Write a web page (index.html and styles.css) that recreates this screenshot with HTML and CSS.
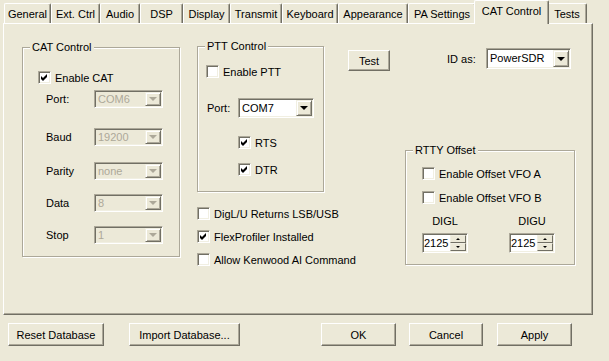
FILE: index.html
```html
<!DOCTYPE html>
<html lang="en">
<head>
    <meta charset="UTF-8">
    <meta name="viewport" content="width=device-width, initial-scale=1.0">
    <title>Setup - CAT Control</title>
    <link rel="stylesheet" href="styles.css">
</head>
<body>
<div class="dialog">

    <!-- Tab strip -->
    <div class="tabs">
        <div class="tab">General</div>
        <div class="tab">Ext. Ctrl</div>
        <div class="tab">Audio</div>
        <div class="tab">DSP</div>
        <div class="tab">Display</div>
        <div class="tab">Transmit</div>
        <div class="tab">Keyboard</div>
        <div class="tab">Appearance</div>
        <div class="tab">PA Settings</div>
        <div class="tab active">CAT Control</div>
        <div class="tab">Tests</div>
    </div>

    <!-- Tab page -->
    <div class="page">

        <!-- CAT Control group -->
        <div class="col col-cat">
            <div class="group group-cat">
                <span class="group-title">CAT Control</span>
                <div class="group-body body-cat">
                    <div class="check check-cat">
                        <span class="box"><svg width="7" height="7" viewBox="0 0 7 7"><polygon points="0,2 2,4 6,0 6,3 2,7 0,5" fill="#000"/></svg></span>
                        <span>Enable CAT</span>
                    </div>
                    <div class="fields">
                        <div class="field field-port">
                            <span class="field-label">Port:</span>
                            <div class="combo combo-cat disabled"><span class="combo-text">COM6</span><span class="combo-btn"><i class="arrow"></i></span></div>
                        </div>
                        <div class="field field-baud">
                            <span class="field-label">Baud</span>
                            <div class="combo combo-cat disabled"><span class="combo-text">19200</span><span class="combo-btn"><i class="arrow"></i></span></div>
                        </div>
                        <div class="field">
                            <span class="field-label">Parity</span>
                            <div class="combo combo-cat disabled"><span class="combo-text">none</span><span class="combo-btn"><i class="arrow"></i></span></div>
                        </div>
                        <div class="field">
                            <span class="field-label">Data</span>
                            <div class="combo combo-cat disabled"><span class="combo-text">8</span><span class="combo-btn"><i class="arrow"></i></span></div>
                        </div>
                        <div class="field">
                            <span class="field-label">Stop</span>
                            <div class="combo combo-cat disabled"><span class="combo-text">1</span><span class="combo-btn"><i class="arrow"></i></span></div>
                        </div>
                    </div>
                </div>
            </div>
        </div>

        <!-- PTT Control group + options -->
        <div class="col col-ptt">
            <div class="group group-ptt">
                <span class="group-title">PTT Control</span>
                <div class="group-body body-ptt">
                    <div class="check check-ptt">
                        <span class="box"></span>
                        <span>Enable PTT</span>
                    </div>
                    <div class="field field-ptt">
                        <span class="field-label ptt-label">Port:</span>
                        <div class="combo combo-ptt"><span class="combo-text">COM7</span><span class="combo-btn"><i class="arrow"></i></span></div>
                    </div>
                    <div class="check check-rts">
                        <span class="box"><svg width="7" height="7" viewBox="0 0 7 7"><polygon points="0,2 2,4 6,0 6,3 2,7 0,5" fill="#000"/></svg></span>
                        <span>RTS</span>
                    </div>
                    <div class="check check-dtr">
                        <span class="box"><svg width="7" height="7" viewBox="0 0 7 7"><polygon points="0,2 2,4 6,0 6,3 2,7 0,5" fill="#000"/></svg></span>
                        <span>DTR</span>
                    </div>
                </div>
            </div>
            <div class="options">
                <div class="check">
                    <span class="box"></span>
                    <span>DigL/U Returns LSB/USB</span>
                </div>
                <div class="check">
                    <span class="box"><svg width="7" height="7" viewBox="0 0 7 7"><polygon points="0,2 2,4 6,0 6,3 2,7 0,5" fill="#000"/></svg></span>
                    <span>FlexProfiler Installed</span>
                </div>
                <div class="check">
                    <span class="box"></span>
                    <span>Allow Kenwood AI Command</span>
                </div>
            </div>
        </div>

        <!-- Test button -->
        <div class="col col-test">
            <button class="btn btn-test">Test</button>
        </div>

        <!-- ID as + RTTY Offset -->
        <div class="col col-right">
            <div class="id-row">
                <span class="id-label">ID as:</span>
                <div class="combo combo-id"><span class="combo-text">PowerSDR</span><span class="combo-btn"><i class="arrow"></i></span></div>
            </div>
            <div class="group group-rtty">
                <span class="group-title">RTTY Offset</span>
                <div class="group-body body-rtty">
                    <div class="check check-vfoa">
                        <span class="box"></span>
                        <span>Enable Offset VFO A</span>
                    </div>
                    <div class="check check-vfob">
                        <span class="box"></span>
                        <span>Enable Offset VFO B</span>
                    </div>
                    <div class="spins">
                        <div class="spin-col">
                            <span class="spin-label">DIGL</span>
                            <div class="spin">
                                <span class="spin-text">2125</span>
                                <span class="spin-btns"><span class="spin-btn"><i class="tri-up"></i></span><span class="spin-btn"><i class="tri-down"></i></span></span>
                            </div>
                        </div>
                        <div class="spin-col">
                            <span class="spin-label">DIGU</span>
                            <div class="spin">
                                <span class="spin-text">2125</span>
                                <span class="spin-btns"><span class="spin-btn"><i class="tri-up"></i></span><span class="spin-btn"><i class="tri-down"></i></span></span>
                            </div>
                        </div>
                    </div>
                </div>
            </div>
        </div>
    </div>

    <!-- Dialog buttons -->
    <div class="footer">
        <button class="btn btn-reset">Reset Database</button>
        <button class="btn btn-import">Import Database...</button>
        <button class="btn btn-ok">OK</button>
        <button class="btn btn-cancel">Cancel</button>
        <button class="btn btn-apply">Apply</button>
    </div>
</div>
</body>
</html>
```

FILE: styles.css
```css
/* Classic Windows dialog look */
body {
    margin: 0;
    background-color: #ECE9D8;
    font-family: "Liberation Sans", Arial, sans-serif;
    font-size: 11px;
    color: #000;
}
.dialog {
    width: 609px;
    height: 361px;
}

/* Tabs */
.tabs {
    display: grid;
    grid-template-columns: 47px 49px 40px 43px 47px 52px 56px 70px 68px 71px 40px;
    align-items: end;
    height: 23px;
    padding-left: 4px;
}
.tab {
    box-sizing: border-box;
    height: 20px;
    border-top: 1px solid #fff;
    border-left: 1px solid #fff;
    border-right: 1px solid #716F64;
    box-shadow: inset -1px 0 #ACA899;
    border-radius: 2px 2px 0 0;
    text-align: center;
    line-height: 20px;
    white-space: nowrap;
}
.tab.active {
    position: relative;
    z-index: 1;
    height: 24px;
    margin: 0 -2px -1px;
    background-color: #ECE9D8;
    line-height: 21px;
}

/* Tab page */
.page {
    box-sizing: border-box;
    display: flex;
    align-items: flex-start;
    width: 590px;
    height: 292px;
    margin-left: 3px;
    padding: 17px 0 0 18px;
    border-top: 1px solid #fff;
    border-left: 1px solid #fff;
    border-right: 1px solid #716F64;
    border-bottom: 1px solid #716F64;
    box-shadow: inset -1px -1px #ACA899;
}
.col-cat {
    width: 158px;
    margin-top: 6px;
}
.col-ptt {
    width: 127px;
    margin-left: 17px;
    margin-top: 5px;
}
.col-test {
    margin-left: 24px;
    margin-top: 8px;
}
.col-right {
    width: 170px;
    margin-left: 15px;
    margin-top: 7px;
}

/* Group boxes */
.group {
    box-sizing: border-box;
    border: 1px solid #ACA899;
    box-shadow: 1px 1px 0 #fff, inset 1px 1px 0 #fff;
}
.group-title {
    display: block;
    width: fit-content;
    margin: -7px 0 0 7px;
    padding: 0 2px;
    line-height: 13px;
    background-color: #ECE9D8;
}
.group-cat { height: 210px; }
.group-ptt { height: 146px; }
.group-rtty {
    height: 115px;
    margin-top: 81px;
}
.body-cat { padding-left: 15px; }
.body-ptt { padding-left: 8px; }
.body-rtty { padding-left: 16px; }

/* Checkboxes */
.check {
    display: flex;
    align-items: center;
    height: 13px;
    white-space: nowrap;
}
.box {
    box-sizing: border-box;
    display: flex;
    align-items: center;
    justify-content: center;
    flex: none;
    width: 13px;
    height: 13px;
    margin-right: 4px;
    background-color: #fff;
    border: 1px solid;
    border-color: #ACA899 #fff #fff #ACA899;
    box-shadow: inset 1px 1px #716F64, inset -1px -1px #F1EFE2;
}
.check-cat { margin-top: 17px; }
.check-ptt { margin-top: 12px; }
.check-rts { margin-top: 18px; margin-left: 32px; }
.check-dtr { margin-top: 14px; margin-left: 32px; }
.check-vfoa { margin-top: 10px; }
.check-vfob { margin-top: 11px; }
.options {
    display: flex;
    flex-direction: column;
    gap: 10px;
    margin-top: 15px;
}

/* Label + combo rows */
.fields {
    display: flex;
    flex-direction: column;
    gap: 14px;
    margin-top: 6px;
    margin-left: 8px;
}
.field {
    display: flex;
    align-items: center;
}
.field-port { margin-bottom: 6px; }
.field-baud { margin-bottom: 2px; }
.field-label {
    width: 48px;
}
.field-ptt {
    margin-top: 20px;
    margin-left: 1px;
}
.ptt-label {
    width: 31px;
}

/* Combo boxes */
.combo {
    box-sizing: border-box;
    display: flex;
    height: 20px;
    padding: 1px;
    background-color: #fff;
    border: 1px solid;
    border-color: #ACA899 #fff #fff #ACA899;
    box-shadow: inset 1px 1px #716F64, inset -1px -1px #F1EFE2;
}
.combo-cat {
    width: 69px;
    height: 18px;
}
.combo-ptt {
    width: 76px;
}
.combo-id {
    width: 85px;
    height: 21px;
}
.combo-text {
    flex: 1;
    padding-left: 2px;
    line-height: 15px;
    overflow: hidden;
    white-space: nowrap;
}
.combo-id .combo-text,
.combo-ptt .combo-text {
    line-height: 16px;
}
.combo-btn {
    box-sizing: border-box;
    display: flex;
    align-items: center;
    justify-content: center;
    width: 16px;
    background-color: #ECE9D8;
    border: 1px solid;
    border-color: #F1EFE2 #716F64 #716F64 #F1EFE2;
    box-shadow: inset 1px 1px #fff, inset -1px -1px #ACA899;
}
.arrow {
    width: 0;
    height: 0;
    border-left: 4px solid transparent;
    border-right: 4px solid transparent;
    border-top: 4px solid #000;
}
.combo.disabled {
    background-color: #ECE9D8;
    color: #ACA899;
}
.combo.disabled .arrow {
    border-top-color: #ACA899;
}

/* ID as */
.id-row {
    display: flex;
    align-items: center;
    margin-left: 42px;
}
.id-label {
    width: 39px;
}

/* Numeric spinners */
.spins {
    display: flex;
    gap: 41px;
    margin-top: 11px;
}
.spin-col {
    display: flex;
    flex-direction: column;
    align-items: center;
    width: 46px;
}
.spin-label {
    line-height: 13px;
}
.spin {
    box-sizing: border-box;
    display: flex;
    width: 46px;
    height: 20px;
    margin-top: 5px;
    padding: 1px;
    background-color: #fff;
    border: 1px solid;
    border-color: #ACA899 #fff #fff #ACA899;
    box-shadow: inset 1px 1px #716F64, inset -1px -1px #F1EFE2;
}
.spin-text {
    flex: 1;
    line-height: 16px;
}
.spin-btns {
    display: flex;
    flex-direction: column;
    width: 16px;
}
.spin-btn {
    box-sizing: border-box;
    flex: 1;
    display: flex;
    align-items: center;
    justify-content: center;
    background-color: #ECE9D8;
    border: 1px solid;
    border-color: #F1EFE2 #716F64 #716F64 #F1EFE2;
}
.tri-up {
    width: 0;
    height: 0;
    border-left: 2px solid transparent;
    border-right: 2px solid transparent;
    border-bottom: 2px solid #000;
}
.tri-down {
    width: 0;
    height: 0;
    border-left: 2px solid transparent;
    border-right: 2px solid transparent;
    border-top: 2px solid #000;
}

/* Buttons */
.btn {
    box-sizing: border-box;
    height: 23px;
    padding: 0;
    background-color: #ECE9D8;
    border: 1px solid;
    border-color: #fff #716F64 #716F64 #fff;
    box-shadow: inset -1px -1px #ACA899;
    font-family: inherit;
    font-size: 11px;
    color: #000;
}
.btn-test {
    width: 42px;
    height: 21px;
    margin-top: 1px;
}
.footer {
    display: flex;
    margin-top: 8px;
    padding-left: 8px;
}
.btn-reset { width: 96px; }
.btn-import { width: 111px; margin-left: 25px; }
.btn-ok { width: 75px; margin-left: 81px; }
.btn-cancel { width: 74px; margin-left: 13px; }
.btn-apply { width: 75px; margin-left: 14px; }
```
